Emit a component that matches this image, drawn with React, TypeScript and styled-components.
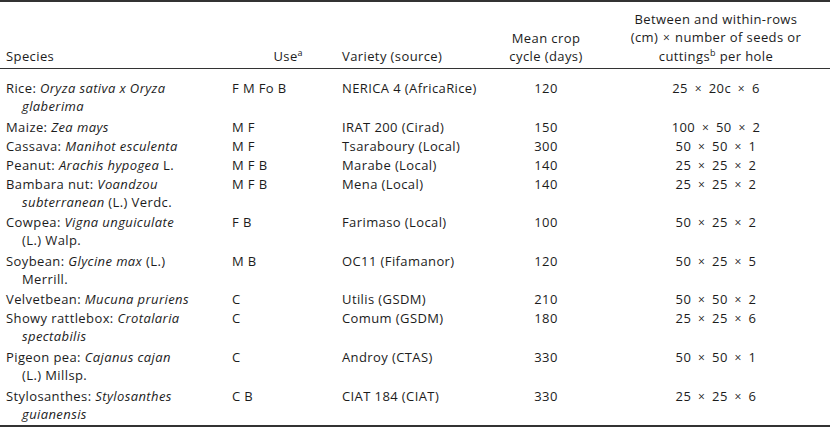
import { FC } from "react";
import styled, { createGlobalStyle } from "styled-components";

const GlobalStyle = createGlobalStyle`
  body {
    margin: 0;
    background: #fff;
    font-family: "Open Sans", "Noto Sans", sans-serif;
    color: #1c1c1c;
  }
`;

const Table = styled.table`
  width: 830px;
  border-collapse: collapse;
  border-top: 2px solid #333;
  border-bottom: 2px solid #333;
  font-size: 13px;
  line-height: 18px;
  letter-spacing: 0.4px;
`;

const HeadRow = styled.tr`
  border-bottom: 1.5px solid #333;
`;

const Th = styled.th<{ $align?: string; $pl?: number; $pr?: number }>`
  font-weight: 400;
  vertical-align: bottom;
  white-space: nowrap;
  text-align: ${(p) => p.$align || "left"};
  padding: 8px ${(p) => p.$pr || 0}px 3px ${(p) => p.$pl || 0}px;
`;

const Row = styled.tr<{ $wrapped?: boolean }>`
  td {
    padding-bottom: ${(p) => (p.$wrapped ? 2.6 : 0)}px;
  }
  &:first-child td {
    padding-top: 10px;
  }
`;

const Td = styled.td<{ $align?: string }>`
  vertical-align: top;
  white-space: nowrap;
  text-align: ${(p) => p.$align || "left"};
  padding: 0;
`;

// 2行目以降をぶら下げインデント
const SpeciesCell = styled(Td)`
  padding-left: 22px;
  text-indent: -16px;
`;

const Sup = styled.sup`
  font-size: 9px;
  line-height: 0;
  vertical-align: 5px;
`;

const Times = styled.span<{ $gap?: number }>`
  font-size: 12px;
  margin: 0 ${(p) => p.$gap ?? 3}px;
`;

type Crop = {
  species: JSX.Element[];
  use: string;
  variety: string;
  cycle: string;
  spacing: [string, string, string];
};

const crops: Crop[] = [
  {
    species: [<>Rice: <i>Oryza sativa x Oryza</i></>, <i>glaberima</i>],
    use: "F M Fo B",
    variety: "NERICA 4 (AfricaRice)",
    cycle: "120",
    spacing: ["25", "20c", "6"],
  },
  { species: [<>Maize: <i>Zea mays</i></>], use: "M F", variety: "IRAT 200 (Cirad)", cycle: "150", spacing: ["100", "50", "2"] },
  { species: [<>Cassava: <i>Manihot esculenta</i></>], use: "M F", variety: "Tsaraboury (Local)", cycle: "300", spacing: ["50", "50", "1"] },
  { species: [<>Peanut: <i>Arachis hypogea</i> L.</>], use: "M F B", variety: "Marabe (Local)", cycle: "140", spacing: ["25", "25", "2"] },
  {
    species: [<>Bambara nut: <i>Voandzou</i></>, <><i>subterranean</i> (L.) Verdc.</>],
    use: "M F B",
    variety: "Mena (Local)",
    cycle: "140",
    spacing: ["25", "25", "2"],
  },
  {
    species: [<>Cowpea: <i>Vigna unguiculate</i></>, <>(L.) Walp.</>],
    use: "F B",
    variety: "Farimaso (Local)",
    cycle: "100",
    spacing: ["50", "25", "2"],
  },
  {
    species: [<>Soybean: <i>Glycine max</i> (L.)</>, <>Merrill.</>],
    use: "M B",
    variety: "OC11 (Fifamanor)",
    cycle: "120",
    spacing: ["50", "25", "5"],
  },
  { species: [<>Velvetbean: <i>Mucuna pruriens</i></>], use: "C", variety: "Utilis (GSDM)", cycle: "210", spacing: ["50", "50", "2"] },
  {
    species: [<>Showy rattlebox: <i>Crotalaria</i></>, <i>spectabilis</i>],
    use: "C",
    variety: "Comum (GSDM)",
    cycle: "180",
    spacing: ["25", "25", "6"],
  },
  {
    species: [<>Pigeon pea: <i>Cajanus cajan</i></>, <>(L.) Millsp.</>],
    use: "C",
    variety: "Androy (CTAS)",
    cycle: "330",
    spacing: ["50", "50", "1"],
  },
  {
    species: [<>Stylosanthes: <i>Stylosanthes</i></>, <i>guianensis</i>],
    use: "C B",
    variety: "CIAT 184 (CIAT)",
    cycle: "330",
    spacing: ["25", "25", "6"],
  },
];

const App: FC = () => {
  return (
    <>
      <GlobalStyle />
      <Table>
        <colgroup>
          <col style={{ width: 232 }} />
          <col style={{ width: 110 }} />
          <col style={{ width: 148 }} />
          <col style={{ width: 112 }} />
          <col style={{ width: 228 }} />
        </colgroup>
        <thead>
          <HeadRow>
            <Th $pl={6}>Species</Th>
            <Th $align="right" $pr={39}>
              Use<Sup>a</Sup>
            </Th>
            <Th>Variety (source)</Th>
            <Th $align="center">
              Mean crop
              <br />
              cycle (days)
            </Th>
            <Th $align="center">
              Between and within-rows
              <br />
              (cm) <Times $gap={1}>×</Times> number of seeds or
              <br />
              cuttings<Sup>b</Sup> per hole
            </Th>
          </HeadRow>
        </thead>
        <tbody>
          {crops.map((c, i) => (
            <Row key={i} $wrapped={c.species.length > 1}>
              <SpeciesCell>
                {c.species.map((line, j) => (
                  <span key={j}>
                    {j > 0 && <br />}
                    {line}
                  </span>
                ))}
              </SpeciesCell>
              <Td>{c.use}</Td>
              <Td>{c.variety}</Td>
              <Td $align="center">{c.cycle}</Td>
              <Td $align="center">
                {c.spacing[0]} <Times>×</Times> {c.spacing[1]} <Times>×</Times> {c.spacing[2]}
              </Td>
            </Row>
          ))}
        </tbody>
      </Table>
    </>
  );
};

export default App;
